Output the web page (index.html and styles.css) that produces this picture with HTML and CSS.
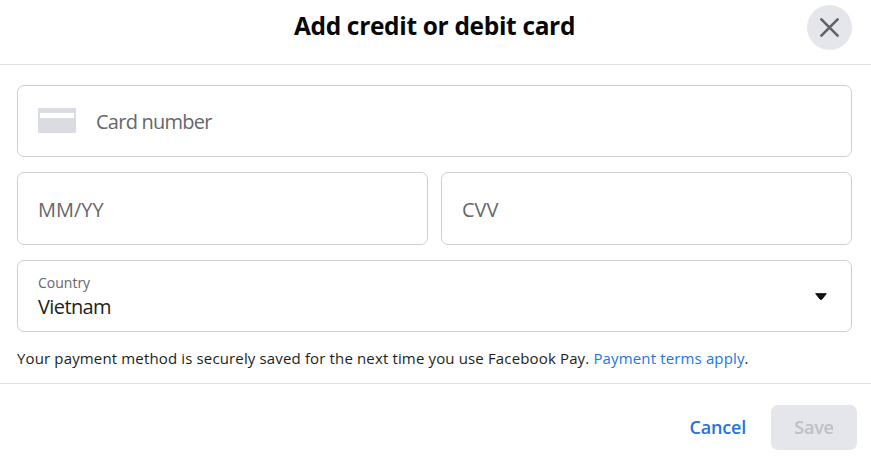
FILE: index.html
```html
<!DOCTYPE html>
<html lang="en">
<head>
  <meta charset="UTF-8" />
  <meta name="viewport" content="width=device-width, initial-scale=1.0"/>
  <title>Add credit or debit card</title>
  <link rel="stylesheet" href="styles.css">
</head>
<body>
  <div class="dialog">
    <header class="header">
      <h2>Add credit or debit card</h2>
      <button class="close" aria-label="Close">
        <svg width="19" height="19" viewBox="0 0 19 19"><path d="M1.4 1.4l16.2 16.2M17.6 1.4L1.4 17.6" fill="none" stroke="#606266" stroke-width="2.6" stroke-linecap="round"/></svg>
      </button>
    </header>

    <form class="form">
      <label class="field card-number">
        <svg width="38" height="26" viewBox="0 0 38 26"><rect width="38" height="25" rx="1" fill="#dadce1"/><rect x="2" y="5" width="34" height="5" fill="#fff"/></svg>
        <span class="placeholder">Card number</span>
      </label>
      <div class="row">
        <label class="field"><span class="placeholder short">MM/YY</span></label>
        <label class="field"><span class="placeholder short">CVV</span></label>
      </div>
      <div class="field country">
        <div class="country-value">
          <span class="small">Country</span>
          <span class="value">Vietnam</span>
        </div>
        <svg width="14" height="9" viewBox="0 0 14 9"><path d="M1.7 1.7h10.6L8 7q-1 1-2 0z" fill="#111" stroke="#111" stroke-width="1" stroke-linejoin="round"/></svg>
      </div>
      <p class="note">Your payment method is securely saved for the next time you use Facebook Pay. <a>Payment terms apply</a>.</p>
    </form>

    <footer class="footer">
      <button class="cancel">Cancel</button>
      <button class="save" disabled>Save</button>
    </footer>
  </div>
</body>
</html>
```
FILE: styles.css
```css
* {
  box-sizing: border-box;
}
body {
  margin: 0;
  font-family: "Segoe UI", "Open Sans", "Noto Sans", sans-serif;
  background: white;
  color: #1c1e21;
}
.dialog {
  width: 871px;
  height: 461px;
  overflow: hidden;
}
.header {
  display: grid;
  grid-template-columns: 64px 1fr 64px;
  height: 65px;
  border-bottom: 1px solid #dddfe2;
}
h2 {
  grid-column: 2;
  margin: 9px 2px 0 0;
  font-size: 24.5px;
  line-height: 34px;
  letter-spacing: -0.33px;
  text-align: center;
  color: #080809;
}
button {
  border: 0;
  padding: 0;
  font-family: inherit;
}
.close {
  display: flex;
  align-items: center;
  justify-content: center;
  width: 45px;
  height: 45px;
  margin-top: 5px;
  border-radius: 50%;
  background: #e4e6eb;
}
.form {
  display: flex;
  flex-direction: column;
  gap: 15px;
  height: 318px;
  padding: 20px 19px 0 17px;
}
.field {
  display: flex;
  align-items: center;
  flex: 1;
  height: 73px;
  padding: 0 20px;
  border: 1px solid #ccd0d5;
  border-radius: 7px;
}
.form > .field {
  flex: none;
  height: 72px;
}
.row {
  display: flex;
  gap: 13px;
}
.card-number {
  gap: 20px;
}
.placeholder {
  padding-top: 1px;
  font-size: 20px;
  letter-spacing: -0.75px;
  color: #65676b;
}
.short {
  letter-spacing: 0;
}
.country {
  justify-content: space-between;
  padding-right: 23px;
}
.country-value {
  display: flex;
  flex-direction: column;
  padding-top: 1px;
}
.small {
  font-size: 14px;
  line-height: 21px;
  color: #65676b;
}
.value {
  font-size: 20px;
  line-height: 28px;
  letter-spacing: -0.6px;
}
.note {
  margin: -1px 0 0;
  font-size: 15px;
  line-height: 24px;
  letter-spacing: 0.145px;
  white-space: nowrap;
}
.note a {
  color: #2374e1;
}
.footer {
  display: flex;
  align-items: flex-start;
  justify-content: flex-end;
  gap: 25px;
  height: 78px;
  padding: 21px 14px 0 0;
  border-top: 1px solid #dddfe2;
}
.footer button {
  height: 45px;
  padding-bottom: 1px;
  font-size: 18px;
  font-weight: 600;
  letter-spacing: -0.2px;
}
.cancel {
  background: none;
  color: #2374e1;
}
.footer .save {
  width: 86px;
  border-radius: 7px;
  background: #e4e6eb;
  color: #bcc0c4;
}
```
